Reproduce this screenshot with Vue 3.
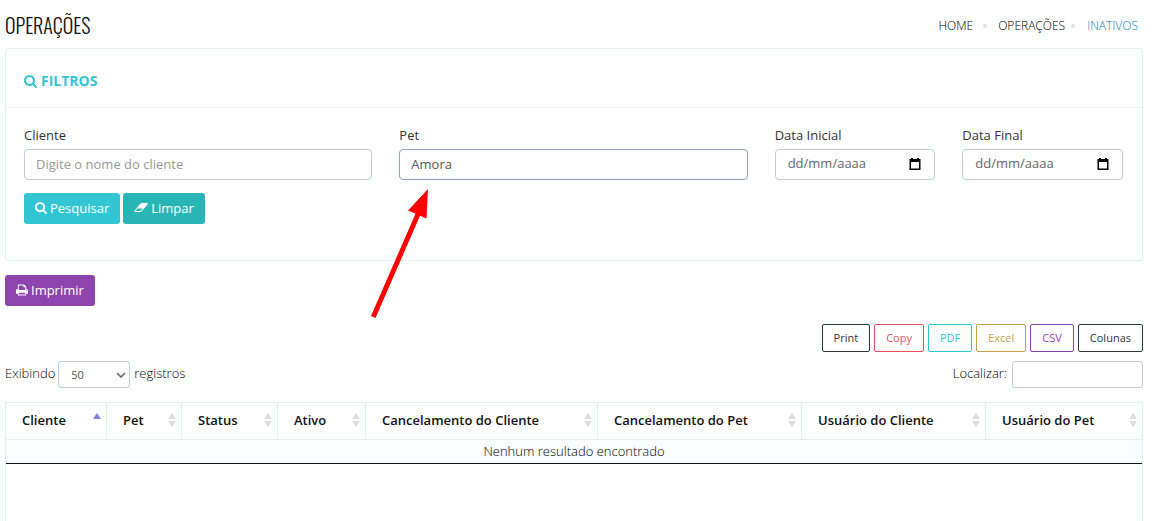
<script setup>
import { ref } from 'vue'

const cliente = ref('')
const pet = ref('Amora')
const dataInicial = ref('')
const dataFinal = ref('')
const tamanho = ref('50')
const busca = ref('')

const exportacoes = [
  { nome: 'Print', cor: 'escuro' },
  { nome: 'Copy', cor: 'vermelho' },
  { nome: 'PDF', cor: 'ciano' },
  { nome: 'Excel', cor: 'dourado' },
  { nome: 'CSV', cor: 'roxo' },
  { nome: 'Colunas', cor: 'escuro' },
]

const colunas = [
  { nome: 'Cliente', peso: 100, ordem: 'asc' },
  { nome: 'Pet', peso: 75 },
  { nome: 'Status', peso: 96 },
  { nome: 'Ativo', peso: 88 },
  { nome: 'Cancelamento do Cliente', peso: 232 },
  { nome: 'Cancelamento do Pet', peso: 204 },
  { nome: 'Usuário do Cliente', peso: 184 },
  { nome: 'Usuário do Pet', peso: 157 },
]
const total = colunas.reduce((soma, c) => soma + c.peso, 0)

const lupa =
  'M1152 832q0-185-131.5-316.5t-316.5-131.5-316.5 131.5-131.5 316.5 131.5 316.5 316.5 131.5 316.5-131.5 131.5-316.5zm512 832q0 52-38 90t-90 38q-54 0-90-38l-343-342q-179 124-399 124-143 0-273.5-55.5t-225-150-150-225-55.5-273.5 55.5-273.5 150-225 225-150 273.5-55.5 273.5 55.5 225 150 150 225 55.5 273.5q0 220-124 399l343 343q37 37 37 90z'
</script>

<template>
  <div class="pagina">
    <header class="topo">
      <h1>OPERAÇÕES</h1>
      <nav class="trilha" aria-label="Trilha">
        <a href="#">HOME</a>
        <i class="ponto"></i>
        <a href="#">OPERAÇÕES</a>
        <i class="ponto perto"></i>
        <a href="#" class="atual">INATIVOS</a>
      </nav>
    </header>

    <section class="painel">
      <h2>
        <svg class="lupa" viewBox="0 128 1664 1664" aria-hidden="true"><path :d="lupa" /></svg>
        FILTROS
      </h2>
      <form class="filtros" @submit.prevent>
        <div class="campo largo">
          <label for="cliente">Cliente</label>
          <input id="cliente" v-model="cliente" type="text" placeholder="Digite o nome do cliente" />
        </div>
        <div class="campo largo">
          <label for="pet">Pet</label>
          <input id="pet" v-model="pet" class="ativo" type="text" />
          <svg class="seta" viewBox="0 0 62 134" aria-hidden="true">
            <path d="M59 2L39 23.500L46.500 26.800L2 129L6.500 131L51 28.800L57.500 31.500Z" />
          </svg>
        </div>
        <div class="campo">
          <label for="inicial">Data Inicial</label>
          <div class="data">
            <input id="inicial" v-model="dataInicial" type="text" placeholder="dd/mm/aaaa" />
            <button type="button" aria-label="Abrir calendário">
              <svg viewBox="0 0 12 12"><path d="M2 0H4V1H8V0H10V1H11.500V12H.5V1H2ZM2 4V10.500H10V4Z" fill-rule="evenodd" /></svg>
            </button>
          </div>
        </div>
        <div class="campo">
          <label for="final">Data Final</label>
          <div class="data">
            <input id="final" v-model="dataFinal" type="text" placeholder="dd/mm/aaaa" />
            <button type="button" aria-label="Abrir calendário">
              <svg viewBox="0 0 12 12"><path d="M2 0H4V1H8V0H10V1H11.500V12H.5V1H2ZM2 4V10.500H10V4Z" fill-rule="evenodd" /></svg>
            </button>
          </div>
        </div>
        <div class="acoes">
          <button class="botao ciano-cheio" type="submit">
            <svg class="icone" viewBox="0 128 1664 1664" aria-hidden="true"><path :d="lupa" /></svg>
            Pesquisar
          </button>
          <button class="botao verde-cheio" type="reset">
            <svg class="borracha" viewBox="0 256 1920 1280" aria-hidden="true">
              <path d="M896 1408l336-384h-768l-336 384h768zm1013-1077q15 34 9.500 71.500t-30.500 65.500l-896 1024q-38 44-96 44h-768q-38 0-69.500-20.500t-47.500-54.500q-15-34-9.500-71.500t30.500-65.500l896-1024q38-44 96-44h768q38 0 69.500 20.500t47.500 54.500z" />
            </svg>
            Limpar
          </button>
        </div>
      </form>
    </section>

    <div class="impressao">
      <button class="botao roxo-cheio" type="button">
        <svg class="icone" viewBox="0 64 1664 1664" aria-hidden="true">
          <path d="M384 1536h896v-256h-896v256zm0-640h896v-384h-160q-40 0-68-28t-28-68v-160h-640v640zm1152 64q0-26-19-45t-45-19-45 19-19 45 19 45 45 19 45-19 19-45zm128 0v416q0 13-9.500 22.500t-22.500 9.500h-224v160q0 40-28 68t-68 28h-960q-40 0-68-28t-28-68v-160h-224q-13 0-22.500-9.500t-9.500-22.500v-416q0-79 56.500-135.500t135.500-56.500h64v-544q0-40 28-68t68-28h672q40 0 88 20t76 48l152 152q28 28 48 76t20 88v256h64q79 0 135.500 56.500t56.500 135.500z" />
        </svg>
        Imprimir
      </button>
    </div>

    <div class="exportar">
      <button v-for="e in exportacoes" :key="e.nome" type="button" :class="e.cor">{{ e.nome }}</button>
    </div>

    <div class="controles">
      <div class="grupo">
        <label for="tamanho">Exibindo</label>
        <div class="seletor">
          <select id="tamanho" v-model="tamanho">
            <option>50</option>
            <option>100</option>
          </select>
          <svg viewBox="0 0 10 6" aria-hidden="true"><path d="M1 1L5 5L9 1" /></svg>
        </div>
        <span class="registros">registros</span>
      </div>
      <div class="grupo">
        <label for="busca">Localizar:</label>
        <input id="busca" v-model="busca" class="busca" type="search" />
      </div>
    </div>

    <div class="moldura">
      <table>
        <colgroup>
          <col v-for="c in colunas" :key="c.nome" :style="{ width: (c.peso / total) * 100 + '%' }" />
        </colgroup>
        <thead>
          <tr>
            <th v-for="c in colunas" :key="c.nome" scope="col">
              <div class="titulo">
                {{ c.nome }}
                <svg :class="{ asc: c.ordem }" viewBox="0 0 8 14" aria-hidden="true">
                  <path d="M4 0L8 6H0Z" />
                  <path v-if="!c.ordem" d="M0 8H8L4 14Z" />
                </svg>
              </div>
            </th>
          </tr>
        </thead>
        <tbody>
          <tr>
            <td :colspan="colunas.length">Nenhum resultado encontrado</td>
          </tr>
        </tbody>
      </table>
    </div>
  </div>
</template>

<style>
body {
  background: #fff;
}
</style>

<style scoped>
* {
  box-sizing: border-box;
}
.pagina {
  display: flex;
  flex-direction: column;
  min-height: 100vh;
  padding: 0 23px 0 5px;
  font-family: 'Open Sans', sans-serif;
  font-size: 13px;
  font-weight: 400;
  line-height: 18px;
  color: #333;
}
input,
select,
button {
  font: inherit;
  margin: 0;
}
button {
  cursor: pointer;
}
svg {
  display: block;
  flex: none;
  fill: currentColor;
}
.topo {
  display: flex;
  justify-content: space-between;
  align-items: center;
  height: 48px;
}
h1 {
  margin: 0;
  padding-top: 2px;
  font: 300 20px/32px Oswald, 'Liberation Sans Narrow', 'Open Sans', sans-serif;
  color: #111;
}
.trilha {
  display: flex;
  align-items: center;
  padding: 4px 5px 0 0;
  font-size: 12px;
  font-weight: 300;
}
.trilha a {
  color: #000;
  text-decoration: none;
}
.trilha .atual {
  color: #0080b8;
}
.ponto {
  width: 4px;
  height: 4px;
  margin: 0 11px 0 10px;
  border-radius: 50%;
  background: #dfe3e6;
}
.ponto.perto {
  margin: 0 12px 0 6px;
}
.painel {
  border: 1px solid #e7ecf1;
  border-radius: 3px;
}
h2 {
  display: flex;
  align-items: center;
  gap: 4px;
  height: 59px;
  margin: 0;
  padding: 6px 18px 0;
  border-bottom: 1px solid #eef1f5;
  font-size: 14px;
  font-weight: 700;
  color: #32c5d2;
}
.lupa {
  width: 13px;
  height: 13px;
}
.filtros {
  display: grid;
  grid-template-columns: repeat(6, 1fr);
  column-gap: 27px;
  padding: 18px 19px 36px 18px;
}
.campo {
  position: relative;
  display: flex;
  flex-direction: column;
  gap: 5px;
  min-width: 0;
}
.largo {
  grid-column: span 2;
}
.campo input {
  width: 100%;
  height: 31px;
  padding: 0 11px 2px;
  border: 1px solid #c2cad8;
  border-radius: 4px;
  background: #fff;
  color: #555;
}
.campo input::placeholder {
  color: #999;
  opacity: 1;
}
.campo .ativo {
  border-color: #93a1bb;
}
.data {
  position: relative;
}
.data input {
  padding: 0 12px 3px;
}
.data input::placeholder {
  color: #666;
}
.data button {
  position: absolute;
  top: 9px;
  right: 14px;
  padding: 0;
  border: 0;
  background: none;
  color: #000;
}
.data svg {
  width: 12px;
  height: 12px;
}
.seta {
  position: absolute;
  z-index: 1;
  top: 61px;
  left: -30px;
  width: 62px;
  height: 134px;
  color: #f00;
  pointer-events: none;
}
.acoes {
  grid-column: 1 / -1;
  display: flex;
  gap: 3px;
  padding-top: 13px;
}
.botao {
  display: flex;
  align-items: center;
  gap: 3px;
  height: 31px;
  padding: 0 11px 2px;
  border: 0;
  border-radius: 3px;
  color: #fff;
}
.icone {
  width: 12px;
  height: 12px;
}
.borracha {
  width: 14px;
  height: 9px;
}
.ciano-cheio {
  background: #32c5d2;
}
.verde-cheio {
  background: #29b4b6;
}
.roxo-cheio {
  background: #8e44ad;
}
.impressao {
  display: flex;
  padding: 14px 0 18px;
}
.exportar {
  display: flex;
  justify-content: flex-end;
  gap: 4px;
}
.exportar button {
  height: 28px;
  padding: 0 11px;
  border: 1px solid currentColor;
  border-radius: 2px;
  background: #fff;
  font-size: 11px;
}
.escuro {
  color: #2f353b;
}
.vermelho {
  color: #e7505a;
}
.ciano {
  color: #32c5d2;
}
.dourado {
  color: #c49f47;
}
.roxo {
  color: #8e44ad;
}
.controles {
  display: flex;
  justify-content: space-between;
  padding: 9px 0 14px;
}
.grupo {
  display: flex;
  align-items: center;
  font-weight: 300;
  color: #000;
}
.grupo label,
.registros {
  padding-bottom: 4px;
}
.seletor {
  position: relative;
  margin: 0 4px 0 3px;
}
.seletor select {
  display: block;
  width: 72px;
  height: 27px;
  padding: 0 12px;
  border: 1px solid #c2cad8;
  border-radius: 3px;
  background: #fff;
  color: #555;
  font-size: 11px;
  font-weight: 400;
  appearance: none;
}
.seletor svg {
  position: absolute;
  top: 11px;
  right: 4px;
  width: 10px;
  height: 6px;
  fill: none;
  stroke: #666;
  stroke-width: 1.6;
  pointer-events: none;
}
.busca {
  width: 131px;
  height: 27px;
  margin-left: 5px;
  padding: 0 8px;
  border: 1px solid #c2cad8;
  border-radius: 3px;
}
.moldura {
  flex: 1;
  border: 1px solid #e7ecf1;
  border-bottom: 0;
}
table {
  width: 100%;
  table-layout: fixed;
  border-collapse: separate;
  border-spacing: 0;
}
th {
  height: 37px;
  padding: 0 5px 2px 16px;
  border-bottom: 1px solid #e7ecf1;
  text-align: left;
  font-weight: 600;
  color: #111;
  white-space: nowrap;
}
th + th {
  border-left: 1px solid #e7ecf1;
}
.titulo {
  display: flex;
  justify-content: space-between;
  align-items: center;
}
.titulo svg {
  width: 8px;
  height: 14px;
  color: #dcdcdc;
}
.titulo .asc {
  color: #7f83dc;
}
td {
  height: 24px;
  padding: 0 0 2px;
  border-bottom: 1px solid #111;
  background: #fbfcfd;
  text-align: center;
  font-weight: 300;
  color: #000;
}
</style>
